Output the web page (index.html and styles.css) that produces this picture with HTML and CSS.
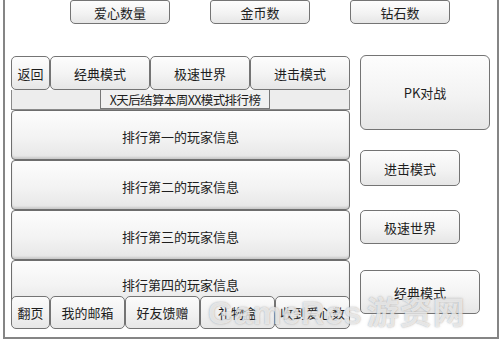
FILE: index.html
```html
<!DOCTYPE html>
<html lang="zh">
<head>
<meta charset="utf-8">
<link rel="stylesheet" href="styles.css">
</head>
<body>
<div class="frame">
  <div class="top">
    <div class="btn top-btn">爱心数量</div>
    <div class="btn top-btn">金币数</div>
    <div class="btn top-btn">钻石数</div>
  </div>
  <div class="main">
    <div class="left">
      <div class="tabs">
        <div class="btn tab tab-s">返回</div>
        <div class="btn tab">经典模式</div>
        <div class="btn tab">极速世界</div>
        <div class="btn tab">进击模式</div>
      </div>
      <div class="banner"><span class="banner-text">X天后结算本周XX模式排行榜</span></div>
      <div class="btn row">排行第一的玩家信息</div>
      <div class="btn row">排行第二的玩家信息</div>
      <div class="btn row">排行第三的玩家信息</div>
      <div class="btn row row-last">排行第四的玩家信息</div>
      <div class="bottom-tabs">
        <div class="btn btab btab-s">翻页</div>
        <div class="btn btab">我的邮箱</div>
        <div class="btn btab">好友馈赠</div>
        <div class="btn btab">礼物盒</div>
        <div class="btn btab">收到爱心数</div>
      </div>
    </div>
    <div class="right">
      <div class="btn pk">PK对战</div>
      <div class="btn mode mode-1">进击模式</div>
      <div class="btn mode mode-2">极速世界</div>
      <div class="btn mode mode-3">经典模式</div>
    </div>
  </div>
  <div class="watermark">GameRes<span class="wm-cn">游资网</span></div>
</div>
</body>
</html>
```
FILE: styles.css
```css
* { box-sizing: border-box; }
html, body { margin: 0; padding: 0; background: #fff; }
body {
  width: 500px;
  height: 340px;
  overflow: hidden;
  font-family: "Noto Sans CJK SC", "Noto Sans", sans-serif;
  font-size: 13px;
  color: #1e1e1e;
}
.frame {
  position: relative;
  width: 496px;
  height: 341px;
  margin: -2px 0 0 3px;
  border: 2px solid #858585;
}
.btn {
  display: flex;
  align-items: center;
  justify-content: center;
  border: 1px solid #747474;
  border-radius: 5px;
  background: linear-gradient(#fdfdfd, #f3f3f3 55%, #e6e6e6);
  white-space: nowrap;
  line-height: 1;
}
.top {
  display: flex;
  gap: 40px;
  padding-left: 65px;
}
.top-btn {
  width: 100px;
  height: 24px;
  border-top-left-radius: 3px;
  border-top-right-radius: 3px;
}
.main {
  display: flex;
  gap: 10px;
  margin-top: 31px;
  padding-left: 6px;
}
.left {
  position: relative;
  width: 339px;
  margin-top: 1px;
  display: flex;
  flex-direction: column;
}
.tabs { display: flex; height: 34px; }
.tab { width: 100px; height: 34px; border-radius: 5px; }
.tab-s { width: 39px; }
.banner {
  height: 20px;
  background: #ededed;
  border: 1px solid #8a8a8a;
  border-top: none;
  padding-left: 88px;
  display: flex;
}
.banner-text {
  width: 170px;
  height: 19px;
  border: 1px solid #777;
  border-top: none;
  background: #f0f0f0;
  display: flex;
  align-items: center;
  justify-content: center;
  font-size: 12.5px;
  letter-spacing: -0.6px;
  white-space: nowrap;
}
.row {
  height: 50px;
  border-radius: 4px;
  border-color: #6e6e6e;
  padding-top: 3px;
  box-shadow: inset 0 -2px 2px rgba(0, 0, 0, 0.12);
}
.row-last { height: 46px; }
.bottom-tabs {
  position: absolute;
  left: 0;
  top: 240px;
  display: flex;
}
.btab { width: 75px; height: 33px; background: linear-gradient(#fbfbfb, #f1f1f1 55%, #e7e7e7); }
.btab-s { width: 39px; }
.right {
  display: flex;
  flex-direction: column;
  align-items: flex-start;
}
.pk { width: 130px; height: 75px; border-radius: 6px; }
.mode { width: 100px; }
.mode-1 { height: 36px; margin-top: 20px; }
.mode-2 { height: 34px; margin-top: 24px; }
.mode-3 { width: 120px; height: 44px; margin-top: 26px; }
.watermark {
  position: absolute;
  left: 203px;
  top: 294px;
  font-family: "Liberation Sans", "Noto Sans CJK SC", sans-serif;
  font-weight: bold;
  font-size: 32px;
  line-height: 1;
  letter-spacing: 1px;
  color: rgba(255, 255, 255, 0.7);
  text-shadow: 0 0 1px rgba(110, 110, 110, 0.45), 0 0 3px rgba(140, 140, 140, 0.35);
  pointer-events: none;
  white-space: nowrap;
}
.wm-cn { font-family: "Noto Sans CJK SC", sans-serif; margin-left: 4px; }
```
